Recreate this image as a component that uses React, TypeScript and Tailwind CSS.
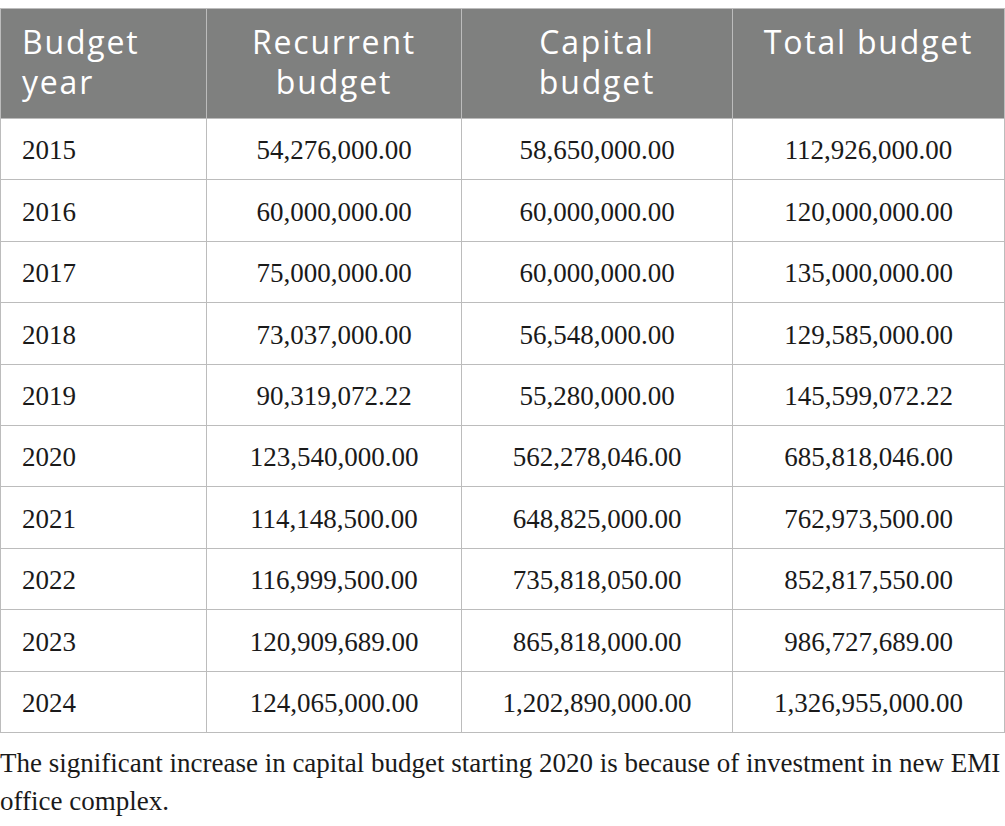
import React from 'react';

interface BudgetRow {
    year: string;
    recurrent: string;
    capital: string;
    total: string;
}

const rows: BudgetRow[] = [
    { year: '2015', recurrent: '54,276,000.00', capital: '58,650,000.00', total: '112,926,000.00' },
    { year: '2016', recurrent: '60,000,000.00', capital: '60,000,000.00', total: '120,000,000.00' },
    { year: '2017', recurrent: '75,000,000.00', capital: '60,000,000.00', total: '135,000,000.00' },
    { year: '2018', recurrent: '73,037,000.00', capital: '56,548,000.00', total: '129,585,000.00' },
    { year: '2019', recurrent: '90,319,072.22', capital: '55,280,000.00', total: '145,599,072.22' },
    { year: '2020', recurrent: '123,540,000.00', capital: '562,278,046.00', total: '685,818,046.00' },
    { year: '2021', recurrent: '114,148,500.00', capital: '648,825,000.00', total: '762,973,500.00' },
    { year: '2022', recurrent: '116,999,500.00', capital: '735,818,050.00', total: '852,817,550.00' },
    { year: '2023', recurrent: '120,909,689.00', capital: '865,818,000.00', total: '986,727,689.00' },
    { year: '2024', recurrent: '124,065,000.00', capital: '1,202,890,000.00', total: '1,326,955,000.00' },
];

const App: React.FC = () => {
    return (
        <main className="bg-white w-[1005px] h-[826px] overflow-hidden">
            <table className="mt-2 w-[1004px] border-collapse table-fixed">
                <colgroup>
                    <col className="w-[206px]" />
                    <col className="w-[255px]" />
                    <col className="w-[271px]" />
                    <col className="w-[272px]" />
                </colgroup>
                <thead>
                    <tr className="h-[110px] bg-[#7f807f] text-white font-['Open_Sans',sans-serif] text-[32px] leading-[40px] tracking-[1.8px] align-top">
                        <th className="border border-[#bcbcbc] font-normal text-left pl-[21px] pt-[13px] pr-2">Budget<br />year</th>
                        <th className="border border-[#bcbcbc] font-normal text-center pt-[13px] px-1">Recurrent<br />budget</th>
                        <th className="border border-[#bcbcbc] font-normal text-center pt-[13px] px-1">Capital<br />budget</th>
                        <th className="border border-[#bcbcbc] font-normal text-center pt-[13px] px-1">Total budget</th>
                    </tr>
                </thead>
                <tbody className="font-['Liberation_Serif',serif] text-[27px] text-[#1a1a1a]">
                    {rows.map(row => (
                        <tr key={row.year} className="h-[61.4px]">
                            <td className="border border-[#bcbcbc] pl-[21px] pt-[3px]">{row.year}</td>
                            <td className="border border-[#bcbcbc] text-center pt-[3px]">{row.recurrent}</td>
                            <td className="border border-[#bcbcbc] text-center pt-[3px]">{row.capital}</td>
                            <td className="border border-[#bcbcbc] text-center pt-[3px]">{row.total}</td>
                        </tr>
                    ))}
                </tbody>
            </table>
            <p className="mt-[11px] font-['Liberation_Serif',serif] text-[27px] leading-[38px] text-[#1a1a1a]">
                The significant increase in capital budget starting 2020 is because of investment in new EMI office complex.
            </p>
        </main>
    );
};

export default App;
